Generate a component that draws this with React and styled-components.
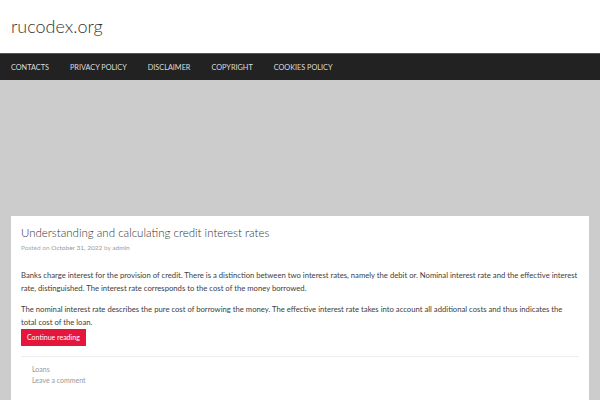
import React from 'react';
import styled, { createGlobalStyle } from 'styled-components';

const GlobalStyle = createGlobalStyle`
  html, body {
    margin: 0;
    padding: 0;
    background: #cccccc;
    font-family: Lato, "Open Sans", sans-serif;
  }
`;

const navItems = ['Contacts', 'Privacy Policy', 'Disclaimer', 'Copyright', 'Cookies Policy'];

const App = () => {
  return (
    <>
      <GlobalStyle />
      <Page>
        <Header>
          <SiteTitle>rucodex.org</SiteTitle>
        </Header>
        <NavBar>
          {navItems.map((item) => (
            <NavLink key={item}>{item}</NavLink>
          ))}
        </NavBar>
        <Banner />
        <Content>
          <Card>
            <PostTitle>Understanding and calculating credit interest rates</PostTitle>
            <Meta>
              Posted on <MetaLink>October 31, 2022</MetaLink> by <MetaLink>admin</MetaLink>
            </Meta>
            <Body>
              <Paragraph>
                Banks charge interest for the provision of credit. There is a distinction between two
                interest rates, namely the debit or. Nominal interest rate and the effective interest
                rate, distinguished. The interest rate corresponds to the cost of the money borrowed.
              </Paragraph>
              <Paragraph>
                The nominal interest rate describes the pure cost of borrowing the money. The effective
                interest rate takes into account all additional costs and thus indicates the total cost
                of the loan.
              </Paragraph>
            </Body>
            <ReadMore>Continue reading</ReadMore>
            <Footer>
              <FooterLink>Loans</FooterLink>
              <FooterLink>Leave a comment</FooterLink>
            </Footer>
          </Card>
        </Content>
      </Page>
    </>
  );
};

const Page = styled.div`
  width: 600px;
  min-height: 400px;
  background: #cccccc;
`;

const Header = styled.header`
  height: 53px;
  background: #ffffff;
  display: flex;
  align-items: center;
  padding: 0 11px;
  box-sizing: border-box;
`;

const SiteTitle = styled.div`
  font-size: 18px;
  font-weight: 300;
  color: #333333;
  margin-top: -1px;
`;

const NavBar = styled.nav`
  height: 27px;
  background: #222222;
  border-top: 1px solid #555555;
  display: flex;
  align-items: center;
  padding: 0 11px;
  gap: 21px;
  box-sizing: border-box;
`;

const NavLink = styled.span`
  font-size: 7.3px;
  text-transform: uppercase;
  color: #dddddd;
`;

const Banner = styled.div`
  height: 136px;
`;

const Content = styled.main`
  padding: 0 11px;
`;

const Card = styled.article`
  background: #ffffff;
  padding: 9px 10px 20px;
`;

const PostTitle = styled.h1`
  margin: 0;
  font-size: 11.5px;
  font-weight: 300;
  color: #333333;
  line-height: 16px;
`;

const Meta = styled.div`
  margin-top: 2px;
  font-size: 6.5px;
  line-height: 10px;
  color: #aaaaaa;
`;

const MetaLink = styled.span`
  color: #999999;
`;

const Body = styled.div`
  margin-top: 16px;
`;

const Paragraph = styled.p`
  margin: 0 0 8px;
  font-size: 7.7px;
  line-height: 13px;
  color: #404040;

  &:last-child {
    margin-bottom: 0;
  }
`;

const ReadMore = styled.div`
  width: max-content;
  background: #e5163b;
  color: #ffffff;
  font-size: 7px;
  line-height: 9px;
  padding: 4px 6px;
`;

const Footer = styled.div`
  margin-top: 10px;
  border-top: 1px solid #eeeeee;
  padding: 7px 11px 0;
  display: flex;
  flex-direction: column;
  gap: 1px;
`;

const FooterLink = styled.span`
  font-size: 7px;
  line-height: 10px;
  color: #999999;
`;

export default App;
